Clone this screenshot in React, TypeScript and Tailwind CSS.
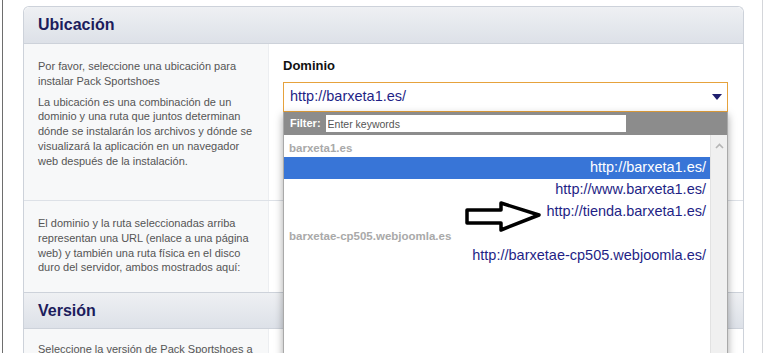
const groups = [
  {
    label: "barxeta1.es",
    options: ["http://barxeta1.es/", "http://www.barxeta1.es/", "http://tienda.barxeta1.es/"],
  },
  {
    label: "barxetae-cp505.webjoomla.es",
    options: ["http://barxetae-cp505.webjoomla.es/"],
  },
];

function SectionHeader({ title, top }: { title: string; top?: boolean }) {
  return (
    <div
      className={`h-[37px] flex items-center pl-[14px] border-b border-[#cdd2da] bg-gradient-to-b from-[#eef0f3] to-[#dde1e8] ${
        top ? "rounded-t-[6px]" : "border-t"
      }`}
    >
      <h2 className="text-[16px] font-bold text-[#1c1c5c]">{title}</h2>
    </div>
  );
}

function DomainDropdown() {
  return (
    <div className="absolute left-0 top-full z-10 w-[445px] h-[260px] bg-white border-x border-[#a9a9a9] shadow-[0_3px_8px_rgba(0,0,0,0.35)]">
      {/* filter bar */}
      <div className="h-[23px] bg-[#8c8c8c] flex items-center pl-[6px]">
        <span className="text-[11px] font-bold text-white mr-[5px]">Filter:</span>
        <input
          className="w-[300px] h-[17px] bg-white pl-[2px] text-[10.5px] text-[#333] placeholder:text-[#555] outline-none"
          placeholder="Enter keywords"
        />
      </div>

      <div className="flex h-full">
        {/* options */}
        <div className="flex-1">
          {groups.map((g) => (
            <div key={g.label}>
              <div className="h-[22px] pt-[7px] pl-[5px] text-[11.5px] leading-[13px] font-bold text-[#a9a9a9]">
                {g.label}
              </div>
              {g.options.map((o, i) => (
                <div
                  key={o}
                  className={`h-[22px] flex items-center justify-end pr-[4px] text-[14.5px] ${
                    g.label === "barxeta1.es" && i === 0 ? "bg-[#3875d7] text-white" : "text-[#1f1f86]"
                  }`}
                >
                  {o}
                </div>
              ))}
            </div>
          ))}
        </div>

        {/* scrollbar */}
        <div className="w-[17px] bg-[#f0f0f0] border-l border-[#e2e2e2] flex justify-center pt-[8px]">
          <svg width="9" height="6" viewBox="0 0 9 6">
            <path d="M1 5 L4.5 1.5 L8 5" fill="none" stroke="#b5b5b5" strokeWidth="1.6" />
          </svg>
        </div>
      </div>
    </div>
  );
}

export default function App() {
  return (
    <div className="relative w-[768px] h-[353px] overflow-hidden bg-white font-['Liberation_Sans',Arial,sans-serif]">
      <div className="ml-[2px] w-[761px] h-full border-l border-[#6e6e6e] border-r border-r-[#d4d6da] pl-[20px] pt-[6px]">
        <div className="w-[721px] border-x border-t border-[#cdd2da] rounded-t-[6px]">
          <SectionHeader title="Ubicación" top />

          {/* row 1 */}
          <div className="flex border-b border-[#dde1e7]">
            <div className="w-[245px] bg-[#f7f8f9] border-r border-[#eceef1] pl-[14px] pt-[15px] pb-[10px] h-[156px] text-[11px] leading-[14.75px] text-[#555]">
              <p>
                Por favor, seleccione una ubicación para
                <br />
                instalar Pack Sportshoes
              </p>
              <p className="mt-[6px]">
                La ubicación es una combinación de un
                <br />
                dominio y una ruta que juntos determinan
                <br />
                dónde se instalarán los archivos y dónde se
                <br />
                visualizará la aplicación en un navegador
                <br />
                web después de la instalación.
              </p>
            </div>
            <div className="flex-1 pl-[14px] pt-[14px]">
              <div className="text-[13px] leading-[16px] font-bold text-[#111] mb-[8px]">Dominio</div>
              <div className="relative w-[445px]">
                <div className="h-[30px] border border-[#e6a23c] flex items-center justify-between pl-[6px] pr-[5px]">
                  <span className="text-[14.5px] text-[#1f1f86]">http://barxeta1.es/</span>
                  <svg width="10" height="6" viewBox="0 0 10 6">
                    <path d="M0 0 H10 L5 6 Z" fill="#1f1f6e" />
                  </svg>
                </div>
                <DomainDropdown />
              </div>
            </div>
          </div>

          {/* row 2 */}
          <div className="flex">
            <div className="w-[245px] h-[91px] bg-[#f7f8f9] border-r border-[#eceef1] pl-[14px] pt-[15px] text-[11px] leading-[14.75px] text-[#555]">
              <p>
                El dominio y la ruta seleccionadas arriba
                <br />
                representan una URL (enlace a una página
                <br />
                web) y también una ruta física en el disco
                <br />
                duro del servidor, ambos mostrados aquí:
              </p>
            </div>
            <div className="flex-1" />
          </div>

          <SectionHeader title="Versión" />

          {/* row 3 */}
          <div className="flex">
            <div className="w-[245px] h-[60px] bg-[#f7f8f9] border-r border-[#eceef1] pl-[14px] pt-[13px] text-[11px] leading-[14.75px] text-[#555]">
              <p>Seleccione la versión de Pack Sportshoes a</p>
            </div>
            <div className="flex-1" />
          </div>
        </div>
      </div>

      {/* hand-drawn annotation arrow */}
      <svg className="absolute left-[460px] top-[198px] z-20" width="88" height="40" viewBox="460 198 88 40">
        <path
          d="M467 210 L501 210 L501 203 L539 215 L501 230 L501 223 L467 223 Z"
          fill="white"
          stroke="black"
          strokeWidth="3.5"
          strokeLinejoin="round"
        />
      </svg>
    </div>
  );
}
